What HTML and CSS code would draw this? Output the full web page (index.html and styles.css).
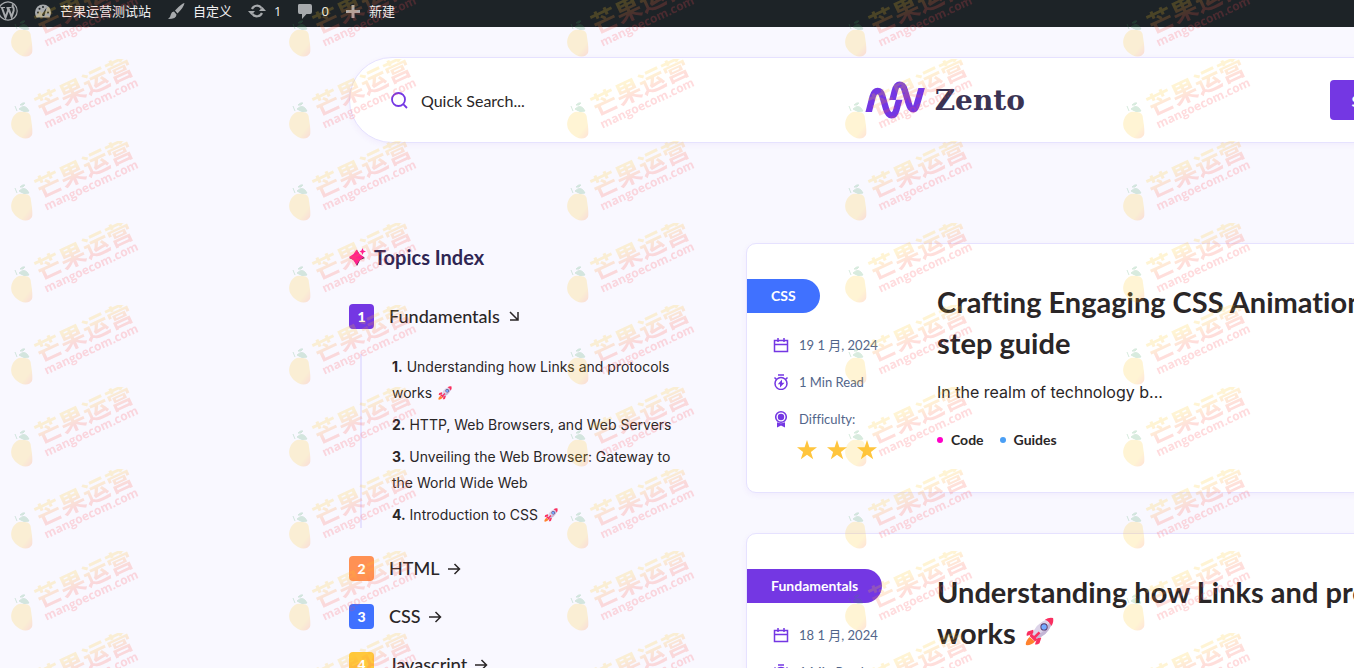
FILE: index.html
```
<!DOCTYPE html>
<html lang="zh-CN">
<head>
    <meta charset="UTF-8">
    <meta name="viewport" content="width=device-width, initial-scale=1.0">
    <title>Zento</title>
    <link rel="stylesheet" href="styles.css">
</head>

<body>
    <!-- shared icons -->
    <svg class="sprite" aria-hidden="true">
        <symbol id="rocket" viewBox="0 0 32 32">
            <path d="M9 14L3 16Q1 19 2 21L10 18zM18 23L16 29Q13 31 11 30L14 22z" fill="#f92f60"/>
            <path d="M5 22Q0 27 1 31Q6 32 11 27z" fill="#ff822d"/>
            <path d="M8 20Q11 8 23 3L29 9Q24 21 12 24z" fill="#dcd3e8"/>
            <path d="M12 24Q24 21 29 9L27 6Q22 17 10 22z" fill="#c4b6d6"/>
            <path d="M22 3Q26 0 31 1Q32 6 29 10Q27 5 22 3z" fill="#f92f60"/>
            <circle cx="21" cy="11" r="4" fill="#533566"/>
            <circle cx="21" cy="11" r="3" fill="#74a9ff"/>
            <path d="M7 18L14 25L11 27L5 21zM15 16L17 18L10 25L8 23z" fill="#f92f60"/>
        </symbol>
        <symbol id="arrow-right" viewBox="0 0 14 14">
            <path d="M1 7H12.500M7.500 2L12.500 7L7.500 12" fill="none" stroke="#2a2627" stroke-width="1.500"/>
        </symbol>
        <symbol id="calendar" viewBox="0 0 16 16">
            <path d="M1.500 3.500H14.500V14.500H1.500zM1.500 7.500H14.500M5 1V5M11 1V5" fill="none" stroke="#7437e3" stroke-width="1.500"/>
        </symbol>
        <symbol id="timer" viewBox="0 0 16 16">
            <circle cx="8" cy="9.500" r="6" fill="none" stroke="#7437e3" stroke-width="1.500"/>
            <path d="M5 1H11M1.500 3.500L3.500 5.500M14.500 3.500L12.500 5.500" stroke="#7437e3" stroke-width="1.500"/>
            <path d="M9 5.500V8.700H11.500L7 13.500V10.300H4.800z" fill="#7437e3"/>
        </symbol>
        <symbol id="award" viewBox="0 0 16 18">
            <circle cx="8" cy="7" r="5.300" fill="none" stroke="#7437e3" stroke-width="1.600"/>
            <circle cx="8" cy="7" r="3.200" fill="#7437e3"/>
            <path d="M4 12.300Q8 14 12 12.300V17.500L8 15.500L4 17.500z" fill="#7437e3"/>
        </symbol>
        <symbol id="star" viewBox="0 0 20 20">
            <path d="M10 0L12.400 7.300H20L13.900 11.900L16.200 19.300L10 14.800L3.800 19.300L6.100 11.900L0 7.300H7.600z" fill="#ffc53d"/>
        </symbol>
    </svg>

    <nav class="adminbar">
        <a class="wp-logo" href="#" aria-label="WordPress">
            <svg width="20" height="20" viewBox="0 0 20 20" fill="none" stroke="#a7aaad">
                <circle cx="10" cy="10" r="9.200" stroke-width="1.200"/>
                <path d="M2.500 6.500H7M8.500 6.500H13.500" stroke-width="1.200"/>
                <path d="M3.800 6.500L7.500 16.500L10.200 9L9.300 6.500M10.200 6.500L13.600 16L15.700 9.500Q16.300 7.500 14.600 5.500Q14.300 4 15.500 3.500" stroke-width="2"/>
            </svg>
        </a>
        <a class="site" href="#">
            <svg width="18" height="18" viewBox="0 0 18 18">
                <path d="M2.500 15.500Q1 13 1 10.500A8 8 0 0 1 17 10.500Q17 13 15.500 15.500z" fill="#a7aaad"/>
                <path d="M8 12.500L12.500 5.500L10.500 13.500A1.400 1.400 0 0 1 8 12.500z" fill="#1d2327"/>
                <circle cx="4" cy="10.500" r="1" fill="#1d2327"/><circle cx="5.500" cy="6.800" r="1" fill="#1d2327"/><circle cx="9" cy="5" r="1" fill="#1d2327"/><circle cx="14" cy="10.500" r="1" fill="#1d2327"/>
            </svg>
            芒果运营测试站
        </a>
        <a href="#">
            <svg width="18" height="18" viewBox="0 0 18 18" fill="#a7aaad">
                <path d="M17.500 1Q15 1 8 8.500L10.500 11.500Q17 5 17.500 1zM7 9.500L9.500 12.500Q9.500 17 1 17Q3.500 15.500 4 12Q4.500 9.500 7 9.500z"/>
            </svg>
            自定义
        </a>
        <a href="#">
            <svg width="18" height="18" viewBox="0 0 18 18" fill="none" stroke="#a7aaad" stroke-width="2.200">
                <path d="M4 7A5.500 5.500 0 0 1 13.500 6M14 11A5.500 5.500 0 0 1 4.500 12"/>
                <path d="M11 9H18L14.500 5zM0 9H7L3.500 13z" fill="#a7aaad" stroke="none"/>
            </svg>
            1
        </a>
        <a href="#">
            <svg width="16" height="18" viewBox="0 0 16 18" fill="#a7aaad">
                <path d="M2 2H13Q15 2 15 4V10Q15 12 13 12H9.500L5 17V12H2.500Q1 12 1 10V3.500Q1 2 2 2z"/>
            </svg>
            0
        </a>
        <a href="#">
            <svg width="16" height="18" viewBox="0 0 16 18">
                <path d="M8 3V16M1 9.500H15" stroke="#a7aaad" stroke-width="3"/>
            </svg>
            新建
        </a>
    </nav>

    <div class="page">
        <header class="header">
            <label class="search">
                <svg width="18" height="18" viewBox="0 0 18 18" fill="none" stroke="#7437e3" stroke-width="1.800">
                    <circle cx="8.500" cy="8.500" r="6.500"/><path d="M13.200 13.200L17 17"/>
                </svg>
                <input type="search" placeholder="Quick Search..." aria-label="Quick Search">
            </label>
            <a class="logo" href="#">
                <svg width="61" height="38" viewBox="72 65 183 114" fill="none" stroke="#7437e3" stroke-width="19">
                    <clipPath id="wave-left"><path d="M60 60H140V121H200V190H120V158H60z"/></clipPath>
                    <clipPath id="wave-right"><path d="M130 60H210V86H270V190H190V122H130z"/></clipPath>
                    <path clip-path="url(#wave-left)" d="M80 170L95 112Q100 95 110 95Q120 95 124 110L135 148Q141 168 152 168Q162 168 166 152L178 108"/>
                    <path clip-path="url(#wave-right)" d="M151 136L161 96Q166 76 176 76Q187 76 191 92L203 132Q208 150 217 150Q224 150 228 134L246 72"/>
                </svg>
                <span>Zento</span>
            </a>
            <button class="subscribe" type="button">Subscribe</button>
        </header>

        <div class="columns">
            <aside class="topics">
                <h2>
                    <svg width="17" height="18" viewBox="0 0 17 18">
                        <path d="M8 2L11 7L16 10L11 12L8 18L5 12L0 10L5 7z" fill="#5b1a4c"/>
                        <path d="M7.500 1.500L10.500 6L15 9L10.500 12.500L7.500 17L4.500 12.500L0 9L4.500 6zM13.500 0L14.500 2.500L17 3.500L14.500 4.500L13.500 7L12.500 4.500L10.500 3.500L12.500 2.500z" fill="#ff1f8f"/>
                    </svg>
                    Topics Index
                </h2>
                <a class="topic" href="#">
                    <span class="num purple">1</span>Fundamentals
                    <svg width="14" height="14" viewBox="0 0 14 14"><path d="M3 2L10.500 9.500M11 2V10H3" fill="none" stroke="#2a2627" stroke-width="1.500"/></svg>
                </a>
                <ul class="chapters">
                    <li><a href="#"><b>1.</b> Understanding how Links and protocols works <svg class="emoji"><use href="#rocket"/></svg></a></li>
                    <li><a href="#"><b>2.</b> HTTP, Web Browsers, and Web Servers</a></li>
                    <li><a href="#"><b>3.</b> Unveiling the Web Browser: Gateway to the World Wide Web</a></li>
                    <li><a href="#"><b>4.</b> Introduction to CSS <svg class="emoji"><use href="#rocket"/></svg></a></li>
                </ul>
                <a class="topic" href="#"><span class="num orange">2</span>HTML <svg width="14" height="14"><use href="#arrow-right"/></svg></a>
                <a class="topic" href="#"><span class="num blue">3</span>CSS <svg width="14" height="14"><use href="#arrow-right"/></svg></a>
                <a class="topic" href="#"><span class="num yellow">4</span>Javascript <svg width="14" height="14"><use href="#arrow-right"/></svg></a>
            </aside>

            <main class="posts">
                <article class="card">
                    <div class="side">
                        <a class="category blue" href="#">CSS</a>
                        <ul class="meta">
                            <li><svg width="16" height="16"><use href="#calendar"/></svg>19 1 月, 2024</li>
                            <li><svg width="16" height="16"><use href="#timer"/></svg>1 Min Read</li>
                            <li><svg width="16" height="18"><use href="#award"/></svg>Difficulty:</li>
                        </ul>
                        <div class="stars" role="img" aria-label="3 stars">
                            <svg><use href="#star"/></svg><svg><use href="#star"/></svg><svg><use href="#star"/></svg>
                        </div>
                    </div>
                    <div class="body">
                        <h3><a href="#">Crafting Engaging CSS Animations: step-by-step guide</a></h3>
                        <p>In the realm of technology b...</p>
                        <div class="tags">
                            <a class="pink" href="#">Code</a>
                            <a class="sky" href="#">Guides</a>
                        </div>
                    </div>
                </article>

                <article class="card">
                    <div class="side">
                        <a class="category purple" href="#">Fundamentals</a>
                        <ul class="meta">
                            <li><svg width="16" height="16"><use href="#calendar"/></svg>18 1 月, 2024</li>
                            <li><svg width="16" height="16"><use href="#timer"/></svg>1 Min Read</li>
                        </ul>
                    </div>
                    <div class="body">
                        <h3><a href="#">Understanding how Links and protocols works <svg class="emoji"><use href="#rocket"/></svg></a></h3>
                    </div>
                </article>
            </main>
        </div>
    </div>

    <!-- repeated watermark -->
    <svg class="watermark" aria-hidden="true">
        <defs>
            <linearGradient id="fade" x1="0" y1="0" x2="0" y2="1">
                <stop offset="0.350" stop-color="#ffc928"/>
                <stop offset="0.750" stop-color="#ff5a4c"/>
            </linearGradient>
            <linearGradient id="fruit" x1="0" y1="0" x2="1" y2="1">
                <stop offset="0.700" stop-color="#ffc928"/>
                <stop offset="1" stop-color="#ff6a3c"/>
            </linearGradient>
            <pattern id="mango" y="-23" width="278" height="82" patternUnits="userSpaceOnUse">
                <path d="M13 58Q17 52 23 53Q31 52 31 60Q33 72 32 76Q28 82 20 78Q7 70 13 58z" fill="url(#fruit)"/>
                <path d="M19 50Q25 44 29 52Q24 54 19 50zM20 46Q23 43 25 44L23 46zM15 47L17 52" fill="#3c9a5a" stroke="#3c9a5a"/>
                <g transform="translate(41 58) rotate(-25)">
                    <text class="mark-name" fill="url(#fade)">芒果运营</text>
                    <text class="mark-site" x="0" y="13" fill="#ff4a55">mangoecom.com</text>
                </g>
            </pattern>
        </defs>
        <rect width="100%" height="100%" fill="url(#mango)"/>
    </svg>
</body>
</html>
```
FILE: styles.css
```
* {
    box-sizing: border-box;
}

html {
    overflow-x: hidden;
    scrollbar-width: none;
}

body {
    margin: 0;
    font-family: Lato, "Noto Sans CJK SC", sans-serif;
    font-variant-ligatures: none;
    color: #2a2627;
    background-color: #f9f8ff;
}

a {
    color: inherit;
    text-decoration: none;
}

ul {
    list-style: none;
    margin: 0;
    padding: 0;
}

h2, h3, p {
    margin: 0;
}

.sprite {
    position: absolute;
    width: 0;
    height: 0;
}

.purple {
    background-color: #7437e3;
}

.orange {
    background-color: #ff9154;
}

.blue {
    background-color: #4071ff;
}

.yellow {
    background-color: #ffc83d;
}

/* admin bar */
.adminbar {
    display: flex;
    align-items: center;
    gap: 16px;
    height: 27px;
    padding-bottom: 5px;
    background-color: #1d2327;
    color: #f0f0f1;
    font-family: "Open Sans", "Noto Sans CJK SC", sans-serif;
    font-size: 13px;
    line-height: 20px;
}

.adminbar a {
    display: flex;
    align-items: center;
    gap: 8px;
}

.adminbar .wp-logo {
    margin-left: -2px;
}

/* header */
.page {
    width: 88vw;
    margin-left: 349px;
    padding-top: 30px;
}

.header {
    display: grid;
    grid-template-columns: 1fr auto 1fr;
    align-items: center;
    height: 86px;
    padding: 0 40px;
    background-color: #fff;
    border: 1px solid #e6e2ff;
    border-radius: 43px;
    box-shadow: 0 2px 6px rgba(116, 55, 227, 0.06);
}

.search {
    display: flex;
    align-items: center;
    gap: 13px;
}

.search input {
    border: none;
    outline: none;
    padding: 0;
    background: none;
    font: inherit;
    font-size: 16px;
    color: #2a2627;
}

.search input::placeholder {
    color: #2a2627;
    opacity: 1;
}

.logo {
    display: flex;
    align-items: center;
    gap: 9px;
    font-family: "DejaVu Serif", serif;
    font-size: 28px;
    font-weight: bold;
    color: #3a3353;
}

.subscribe {
    justify-self: end;
    width: 170px;
    height: 40px;
    padding: 0 22px;
    border: none;
    border-radius: 4px;
    background-color: #7437e3;
    color: #fff;
    font: inherit;
    font-weight: bold;
    text-align: left;
    cursor: pointer;
}

.columns {
    display: grid;
    grid-template-columns: 397px 1fr;
    padding-top: 100px;
}

/* topics */
.topics h2 {
    display: flex;
    align-items: center;
    gap: 8px;
    margin-bottom: 33px;
    font-size: 20px;
    line-height: 28px;
    color: #2f2653;
}

.topic {
    display: flex;
    align-items: center;
    gap: 7px;
    margin-bottom: 23px;
    font-size: 18px;
    font-weight: 500;
    line-height: 25px;
}

.num {
    width: 25px;
    height: 25px;
    margin-right: 8px;
    border-radius: 4px;
    color: #fff;
    font-size: 14px;
    font-weight: 900;
    text-align: center;
}

.chapters {
    display: flex;
    flex-direction: column;
    gap: 6px;
    width: 316px;
    margin: 25px 0 28px 11px;
    padding-left: 30px;
    border-left: 2px solid #e6e2ff;
    font-family: Inter, sans-serif;
    font-size: 14px;
    line-height: 26px;
}

.emoji {
    width: 1em;
    height: 1em;
    margin-left: 2px;
    vertical-align: -2px;
}

/* posts */
.card {
    display: flex;
    min-height: 250px;
    margin-bottom: 40px;
    padding: 35px 20px 30px 0;
    background-color: #fff;
    border: 1px solid #e6e2ff;
    border-radius: 10px;
    box-shadow: 0 2px 6px rgba(116, 55, 227, 0.06);
}

.side {
    flex: 0 0 190px;
}

.category {
    display: inline-block;
    padding: 0 24px;
    border-radius: 0 17px 17px 0;
    color: #fff;
    font-size: 14px;
    font-weight: bold;
    line-height: 34px;
}

.meta {
    padding: 22px 0 0 26px;
    font-size: 13px;
    color: #52658a;
}

.meta li {
    display: flex;
    align-items: center;
    gap: 10px;
    margin-bottom: 17px;
    line-height: 20px;
}

.stars {
    display: flex;
    gap: 10px;
    margin: -6px 0 0 50px;
}

.stars svg {
    width: 20px;
    height: 20px;
}

.body {
    flex: 1;
    padding-top: 2px;
}

.body h3 {
    font-size: 29px;
    line-height: 41px;
}

.body p {
    margin: 17px 0 24px;
    font-family: Inter, sans-serif;
    font-size: 16px;
    line-height: 24px;
}

.tags {
    display: flex;
    gap: 16px;
    font-size: 14px;
    font-weight: bold;
    line-height: 24px;
}

.tags a {
    display: flex;
    align-items: center;
    gap: 8px;
}

.tags a::before {
    content: "";
    width: 6px;
    height: 6px;
    border-radius: 50%;
    background-color: #ff00c8;
}

.tags .sky::before {
    background-color: #4a9ff5;
}

/* watermark */
.watermark {
    position: fixed;
    inset: 0;
    width: 100%;
    height: 100%;
    opacity: 0.2;
    pointer-events: none;
}

.mark-name {
    font-family: "Noto Sans CJK SC", sans-serif;
    font-size: 26px;
    font-weight: bold;
}

.mark-site {
    font-family: "Open Sans", sans-serif;
    font-size: 12px;
    font-weight: bold;
}
```
